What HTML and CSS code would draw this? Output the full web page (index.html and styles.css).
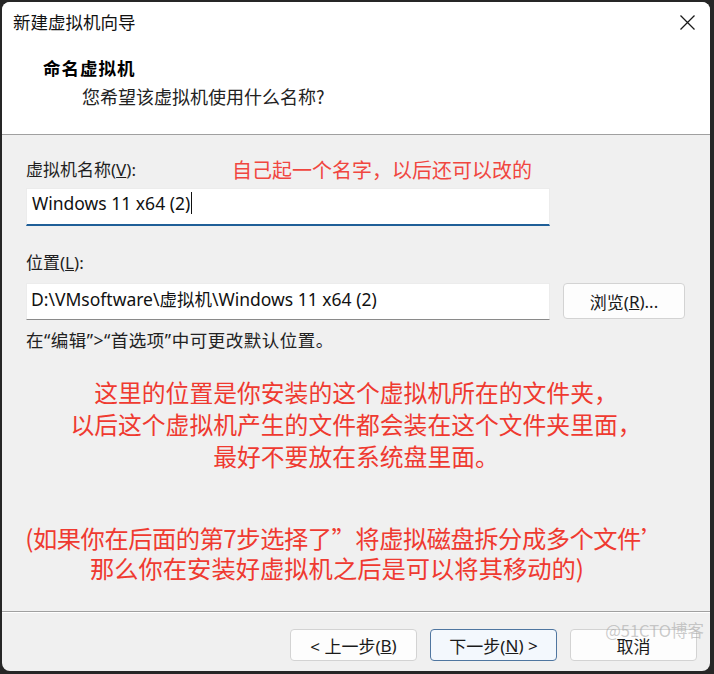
FILE: index.html
```html
<!DOCTYPE html>
<html lang="zh-CN">
<head>
<meta charset="utf-8">
<title>新建虚拟机向导</title>
<link rel="stylesheet" href="styles.css">
</head>
<body>
<div class="window">
  <div class="header">
    <div class="titlebar">
      <span class="title">新建虚拟机向导</span>
      <svg class="close" width="15" height="15" viewBox="0 0 15 15"><path d="M0.5 0.5 L14.5 14.5 M14.5 0.5 L0.5 14.5" stroke="#1a1a1a" stroke-width="1.3" fill="none"/></svg>
    </div>
    <div class="heading">命名虚拟机</div>
    <div class="subheading">您希望该虚拟机使用什么名称?</div>
  </div>
  <div class="body">
    <div class="label-row">
      <span class="label">虚拟机名称(<u>V</u>):</span>
      <span class="note">自己起一个名字，以后还可以改的</span>
    </div>
    <div class="field field-active">Windows 11 x64 (2)<span class="caret"></span></div>
    <div class="label label2">位置(<u>L</u>):</div>
    <div class="path-row">
      <div class="field field-path">D:\VMsoftware\虚拟机\Windows 11 x64 (2)</div>
      <div class="btn btn-browse">浏览(<u>R</u>)...</div>
    </div>
    <div class="hint">在“编辑”&gt;“首选项”中可更改默认位置。</div>
    <div class="red-block">
      <div>这里的位置是你安装的这个虚拟机所在的文件夹，</div>
      <div>以后这个虚拟机产生的文件都会装在这个文件夹里面，</div>
      <div>最好不要放在系统盘里面。</div>
    </div>
    <div class="red-block red-paren">
      <div class="paren-first">(如果你在后面的第7步选择了”将虚拟磁盘拆分成多个文件’</div>
      <div>那么你在安装好虚拟机之后是可以将其移动的)</div>
    </div>
  </div>
  <div class="footer">
    <div class="btn">&lt; 上一步(<u>B</u>)</div>
    <div class="btn btn-default">下一步(<u>N</u>) &gt;</div>
    <div class="btn">取消</div>
    <span class="watermark">@51CTO博客</span>
  </div>
</div>
</body>
</html>
```
FILE: styles.css
```css
html, body {
  margin: 0;
  padding: 0;
}
body {
  background: #262626;
  width: 714px;
  height: 674px;
  overflow: hidden;
  font-family: "Noto Sans", "Noto Sans CJK SC", sans-serif;
  color: #1a1a1a;
}
.window {
  margin: 2px 4px 3px 2px;
  height: 669px;
  border-radius: 8px;
  background: #f0f0f0;
  overflow: hidden;
  display: flex;
  flex-direction: column;
  position: relative;
}
.header {
  background: #ffffff;
  height: 132px;
  border-bottom: 1px solid #a0a0a0;
  flex: none;
}
.titlebar {
  height: 40px;
  display: flex;
  align-items: center;
  justify-content: space-between;
  padding: 0 15px 0 11px;
}
.title {
  font-family: "Noto Sans CJK SC", sans-serif;
  font-size: 17.5px;
  line-height: 24px;
  color: #111;
}
.close {
  display: block;
}
.heading {
  margin-top: 14px;
  padding-left: 41px;
  font-family: "Noto Sans CJK SC", sans-serif;
  font-weight: 700;
  font-size: 17.5px;
  line-height: 24px;
  letter-spacing: 1px;
  color: #000;
}
.subheading {
  margin-top: 4px;
  padding-left: 80px;
  font-family: "Noto Sans CJK SC", sans-serif;
  font-size: 18px;
  line-height: 24px;
  color: #222;
}
.body {
  flex: 1;
  padding: 23px 0 0 24px;
  display: flex;
  flex-direction: column;
  align-items: flex-start;
}
.label-row {
  display: grid;
  grid-template-columns: 206px auto;
  align-items: center;
  height: 24px;
}
.label {
  font-size: 17px;
  line-height: 24px;
  color: #1f1f1f;
}
.note {
  font-family: "Noto Sans CJK SC", sans-serif;
  font-size: 20px;
  line-height: 24px;
  color: #f0463f;
}
.field {
  box-sizing: border-box;
  width: 524px;
  background: #ffffff;
  border: 1px solid #ececec;
  font-size: 17.5px;
  color: #111;
  display: flex;
  align-items: center;
  padding-left: 5px;
}
.field-active {
  margin-top: 6px;
  height: 38px;
  border-bottom: 2px solid #1f5f98;
  padding-bottom: 7px;
}
.caret {
  display: inline-block;
  width: 0;
  height: 22px;
  border-left: 1px solid #111;
  margin-left: 1px;
}
.label2 {
  margin-top: 25px;
}
.path-row {
  margin-top: 8px;
  display: flex;
  gap: 13px;
}
.field-path {
  height: 37px;
  border-bottom: 1px solid #8a8a8a;
  padding-left: 4px;
  padding-bottom: 7px;
  font-size: 17.5px;
}
.btn {
  box-sizing: border-box;
  width: 127px;
  height: 32px;
  background: #fdfdfd;
  border: 1px solid #d3d3d3;
  border-radius: 4px;
  display: flex;
  align-items: center;
  justify-content: center;
  font-size: 17px;
  color: #1a1a1a;
}
.btn-browse {
  width: 122px;
  height: 36px;
}
.hint {
  margin-top: 8px;
  font-size: 17.5px;
  letter-spacing: 0.5px;
  line-height: 24px;
  color: #222;
}
.red-block {
  align-self: stretch;
  margin-left: -24px;
  margin-top: 24px;
  text-align: center;
  font-family: "Noto Sans CJK SC", sans-serif;
  font-size: 23.8px;
  line-height: 32px;
  color: #ef3a30;
}
.red-paren {
  margin-top: 51px;
  font-size: 24.3px;
  line-height: 30px;
  padding-right: 38px;
}
.paren-first {
  letter-spacing: -0.5px;
  padding-left: 16px;
}
.footer {
  flex: none;
  height: 60px;
  box-sizing: border-box;
  border-top: 1px solid #a0a0a0;
  box-shadow: inset 0 1px 0 #ffffff;
  display: flex;
  justify-content: flex-end;
  align-items: flex-start;
  gap: 13px;
  padding: 17px 13px 0 0;
  position: relative;
}
.btn-default {
  border-color: #4f76a0;
  background: #f3f8fd;
}
.watermark {
  position: absolute;
  right: 6px;
  top: 6px;
  font-family: "Noto Sans CJK SC", sans-serif;
  font-size: 16.5px;
  color: rgba(160, 160, 160, 0.55);
}
```
